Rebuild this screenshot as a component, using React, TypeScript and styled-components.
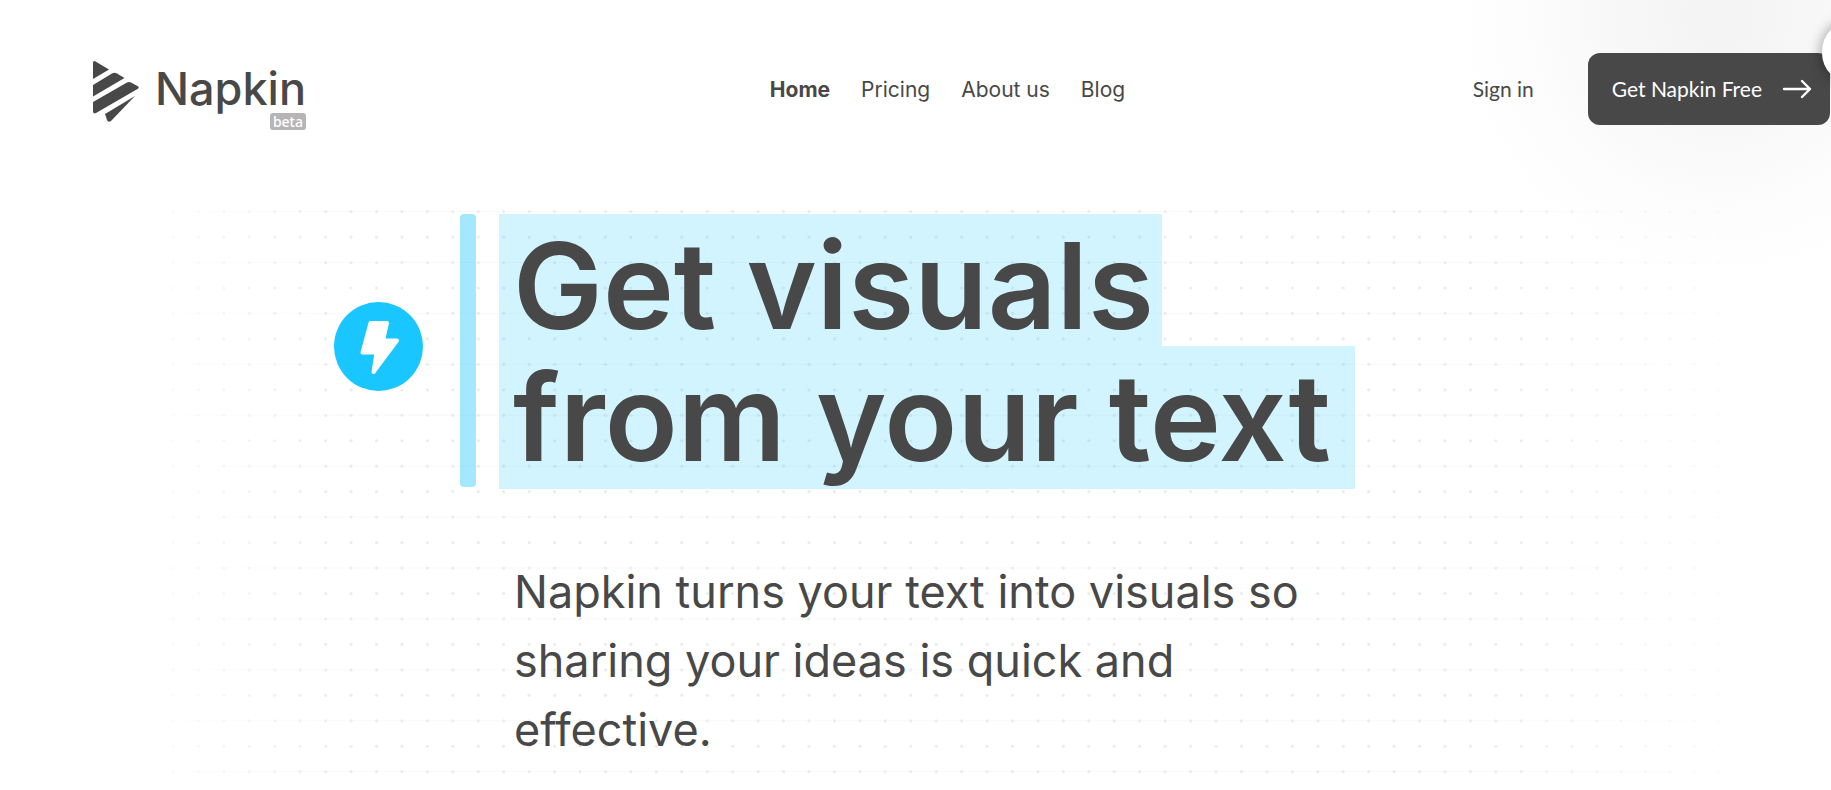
import React from "react";
import styled, { createGlobalStyle } from "styled-components";

const INK = "#484848";

const GlobalStyle = createGlobalStyle`
  *, *::before, *::after { box-sizing: border-box; }
  body {
    margin: 0;
    background: #fff;
    color: ${INK};
    font-family: Inter, "Liberation Sans", sans-serif;
  }
`;

const Page = styled.div`
  position: relative;
  min-height: 100vh;
  overflow: hidden;
  background: radial-gradient(circle 275px at calc(100% - 111px) 14px, #f3f3f3 0%, #f8f8f8 42%, #fdfdfd 75%, #fff 100%);
`;

const DotCanvas = styled.svg`
  position: absolute;
  top: 0;
  left: 0;
  width: 100%;
  pointer-events: none;
`;

const Header = styled.header`
  position: relative;
  display: grid;
  grid-template-columns: 1fr auto 1fr;
  align-items: center;
  padding: 53px 1px 0 65px;
`;

const Brand = styled.a`
  justify-self: start;
  display: flex;
  align-items: center;
  gap: 16px;
  padding-left: 28px;
  color: ${INK};
  text-decoration: none;
`;

const Mark = styled.svg`
  width: 46px;
  height: 65px;
`;

const Wordmark = styled.span`
  position: relative;
  font-size: 45px;
  font-weight: 500;
  line-height: 60px;
`;

const Beta = styled.span`
  position: absolute;
  right: 0;
  bottom: -11px;
  padding: 0 3px;
  border-radius: 3px;
  background: #b5b5b5;
  color: #fff;
  font: 500 14px/17px "Noto Sans", sans-serif;
`;

const Nav = styled.nav`
  display: flex;
  gap: 31px;
  padding-top: 2px;
`;

const NavLink = styled.a<{ $active?: boolean }>`
  color: ${INK};
  font-size: 21px;
  line-height: 32px;
  font-weight: ${(p) => (p.$active ? 700 : 400)};
  text-decoration: none;
`;

const Actions = styled.div`
  justify-self: end;
  display: flex;
  align-items: center;
  gap: 54px;
`;

const SignIn = styled.a`
  color: ${INK};
  font: 400 21px/32px Lato, sans-serif;
  text-decoration: none;
`;

const GetButton = styled.button`
  display: flex;
  align-items: center;
  gap: 20px;
  height: 72px;
  padding: 0 18px 0 24px;
  border: 0;
  border-radius: 12px;
  background: ${INK};
  color: #fff;
  font: 400 21px/32px Lato, sans-serif;
  white-space: nowrap;
`;

const SideBubble = styled.div`
  position: absolute;
  top: 21px;
  right: -51px;
  width: 60px;
  height: 62px;
  border-radius: 30px;
  background: #fff;
  box-shadow: 0 0 14px rgba(0, 0, 0, 0.4);
`;

const Hero = styled.main`
  position: relative;
  max-width: 1163px;
  margin: 89px auto 0;
`;

const HeadRow = styled.div`
  display: flex;
  align-items: flex-start;
`;

const Spark = styled.svg`
  flex: none;
  width: 89px;
  height: 89px;
  margin: 88px 37px 0 0;
`;

const Bar = styled.div`
  flex: none;
  width: 16px;
  height: 273px;
  margin-right: 23px;
  border-radius: 4px;
  background: rgba(26, 198, 255, 0.4);
`;

const Title = styled.h1`
  margin: 0;
  font-size: 120px;
  line-height: 132px;
  font-weight: 600;
  white-space: nowrap;
`;

const Highlight = styled.span<{ $width: number; $height: number }>`
  display: block;
  width: ${(p) => p.$width}px;
  height: ${(p) => p.$height}px;
  padding: 6px 0 0 14px;
  background: rgba(26, 198, 255, 0.2);
`;

const Lead = styled.p`
  max-width: 820px;
  margin: 68px 0 0 180px;
  font-size: 45px;
  line-height: 69px;
`;

const dotColumns = [
  ...Array.from({ length: 56 }, (_, i) => 173 + i * 25.44),
  ...Array.from({ length: 6 }, (_, i) => 1597 + i * 24.33),
];
const dotRows = Array.from({ length: 23 }, (_, i) => 211.6 + i * 25.46);

function Dots() {
  return (
    <DotCanvas viewBox="0 0 1831 790" aria-hidden="true">
      <defs>
        <linearGradient id="fade" gradientUnits="userSpaceOnUse" x1="150" x2="1740" y1="0" y2="0">
          <stop offset="0" stopColor="#fff" stopOpacity="0.15" />
          <stop offset="0.12" stopColor="#fff" />
          <stop offset="0.84" stopColor="#fff" />
          <stop offset="1" stopColor="#fff" stopOpacity="0.1" />
        </linearGradient>
        <mask id="edge" maskUnits="userSpaceOnUse" x="0" y="0" width="1831" height="790">
          <rect x="150" width="1590" height="790" fill="url(#fade)" />
        </mask>
      </defs>
      <g mask="url(#edge)">
        {dotRows.map((y, r) => (
          <g key={r}>
            {r % 2 === 0 && <rect x="173" y={y - 0.6} width="1546" height="1" fill="#f9f9f9" />}
            {dotColumns.map((x) => (
              <circle key={x} cx={x} cy={y} r="1.6" fill="#ececec" />
            ))}
          </g>
        ))}
      </g>
    </DotCanvas>
  );
}

const links = ["Home", "Pricing", "About us", "Blog"];

export default function App() {
  return (
    <Page>
      <GlobalStyle />
      <Dots />
      <Header>
        <Brand href="#">
          <Mark viewBox="0 -4 46 65" fill={INK} aria-hidden="true">
            <path d="M0 2Q0-1 3 .7L16 8.400L0 18Z" />
            <path d="M0 24L19 12.500Q21.500 11 24 12.500L31.500 17L0 35.500Z" />
            <path d="M0 41L34 21.500Q36 20.400 38 21.500L44.500 25Q47 26.500 44.500 28L3 52Q0 53.500 0 50Z" />
            <path d="M12 53L42 35L18 60Q15 62 14 59Z" />
          </Mark>
          <Wordmark>
            Napkin<Beta>beta</Beta>
          </Wordmark>
        </Brand>
        <Nav>
          {links.map((label, i) => (
            <NavLink key={label} href="#" $active={i === 0}>
              {label}
            </NavLink>
          ))}
        </Nav>
        <Actions>
          <SignIn href="#">Sign in</SignIn>
          <GetButton type="button">
            Get Napkin Free
            <svg width="30" height="20" viewBox="0 0 30 20" fill="none" stroke="#fff" strokeWidth="2.4" strokeLinecap="round" strokeLinejoin="round" aria-hidden="true">
              <path d="M2 10H28M20 2L28 10L20 18" />
            </svg>
          </GetButton>
        </Actions>
      </Header>
      <SideBubble />
      <Hero>
        <HeadRow>
          <Spark viewBox="0 0 89 89" aria-hidden="true">
            <circle cx="44.500" cy="44.500" r="44.500" fill="#1ac6ff" />
            <path
              d="M36.500 21H53L49 38.500H63L39.500 70L42.500 50.500H28.500Z"
              fill="#fff"
              stroke="#fff"
              strokeWidth="4"
              strokeLinejoin="round"
            />
          </Spark>
          <Bar />
          <Title>
            <Highlight $width={663} $height={132}>Get visuals</Highlight>
            <Highlight $width={856} $height={143}>from your text</Highlight>
          </Title>
        </HeadRow>
        <Lead>Napkin turns your text into visuals so sharing your ideas is quick and effective.</Lead>
      </Hero>
    </Page>
  );
}
